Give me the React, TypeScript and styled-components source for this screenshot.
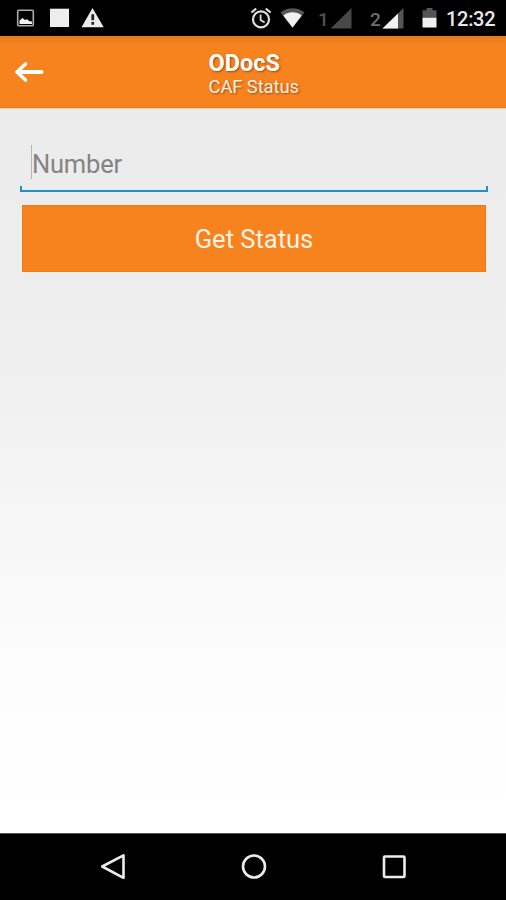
import React from 'react';
import styled, { createGlobalStyle } from 'styled-components';

const GlobalStyle = createGlobalStyle`
  * { box-sizing: border-box; }
  body { margin: 0; font-family: Roboto, "Liberation Sans", sans-serif; background: #fff; }
`;

const Screen = styled.div`
  width: 506px;
  height: 900px;
  display: flex;
  flex-direction: column;
  overflow: hidden;
`;

const StatusBar = styled.div`
  flex: none;
  height: 36px;
  background: #000;
  display: flex;
  align-items: center;
  padding: 0 10px 0 16px;
`;

const StatusGlyph = styled.svg<{ $gap?: number }>`
  flex: none;
  display: block;
  margin-right: ${(p) => p.$gap ?? 0}px;
`;

const Spacer = styled.div`
  flex: 1;
`;

const SimNumber = styled.span<{ $dim?: boolean }>`
  width: 12px;
  font-size: 19px;
  line-height: 22px;
  padding-top: 4px;
  font-weight: 500;
  color: ${(p) => (p.$dim ? '#515151' : '#6e6e6e')};
`;

const Clock = styled.span`
  width: 50px;
  font-size: 20px;
  line-height: 22px;
  padding-top: 2px;
  font-weight: 500;
  letter-spacing: -0.3px;
  color: #e8e8e8;
  white-space: nowrap;
`;

const AppBar = styled.header`
  flex: none;
  height: 73px;
  display: flex;
  background: linear-gradient(#e6781c 0, #f07d1d 4px, #f7831f 10px, #f7831f 70px, #ee7b18 72px, #f9cfad 72px);
`;

const BackButton = styled.button`
  width: 208.5px;
  height: 72px;
  padding: 0 0 0 14px;
  border: 0;
  background: none;
  display: flex;
  align-items: center;
`;

const Titles = styled.div`
  padding-top: 13px;
  color: #fff;
  text-shadow: 1px 1px 2px rgba(110, 45, 0, 0.65);
`;

const Title = styled.h1`
  margin: 0;
  font-size: 23.5px;
  line-height: 29px;
  font-weight: 700;
`;

const Subtitle = styled.div`
  font-size: 18.5px;
  line-height: 18px;
  letter-spacing: -0.15px;
  color: #fff0e3;
`;

const Content = styled.main`
  flex: 1;
  padding: 31px 18px 0 20px;
  background: linear-gradient(#ebebeb 0, #efefef 35%, #f7f7f7 60%, #fdfdfd 80%, #fff 100%);
`;

const Field = styled.div`
  height: 52px;
  display: flex;
  flex-direction: column;
  justify-content: space-between;
`;

const FieldText = styled.div`
  height: 34px;
  margin: 5px 0 0 11px;
  border-left: 1.5px solid #b5b5b5;
  font-size: 25.5px;
  letter-spacing: -0.2px;
  line-height: 38px;
  color: #848484;
`;

const Underline = styled.div`
  height: 6px;
  border: 2px solid #2091c3;
  border-top: 0;
`;

const SubmitButton = styled.button`
  display: block;
  width: 464px;
  height: 67px;
  margin: 12.5px 0 0 2px;
  padding: 2px 0 0;
  border: 1px solid #ec7c1a;
  background: #f7831f;
  color: #fff2e6;
  font: 400 25.5px/30px Roboto, "Liberation Sans", sans-serif;
`;

const NavBar = styled.nav`
  flex: none;
  height: 67px;
  background: #000;
  border-top: 1px solid #555;
  display: flex;
  align-items: center;
  justify-content: space-between;
  padding: 0 98px 0 99px;
`;

const NavGlyph = styled.svg`
  display: block;
  width: 28px;
  height: 28px;
  fill: none;
  stroke: #ececec;
  stroke-width: 2.6;
  stroke-linejoin: round;
`;

export default function App() {
  return (
    <>
      <GlobalStyle />
      <Screen>
        <StatusBar>
          <StatusGlyph width="19" height="22" $gap={15}>
            <rect x="1.7" y="3.2" width="15.6" height="15.6" rx="1" fill="none" stroke="#aaa" strokeWidth="1.6" />
            <path d="M3.5 17v-3.500l3-2.500 2.500 2 2-.8 2.500 2 2.500.4V17z" fill="#f2f2f2" />
          </StatusGlyph>
          <StatusGlyph width="19" height="22" $gap={12}>
            <rect y="1.7" width="19" height="18.3" fill="#ededed" />
          </StatusGlyph>
          <StatusGlyph width="23" height="22">
            <path d="M11.5 1 L22.7 20.2 H.5z" fill="#ececec" />
            <path d="M10.4 7.3h2.7v6h-2.700zM10.400 15h2.700v2.800h-2.700z" fill="#222" />
          </StatusGlyph>
          <Spacer />
          <StatusGlyph width="22" height="22" $gap={8} fill="none" stroke="#dedede">
            <circle cx="11" cy="12.4" r="8" strokeWidth="2.2" />
            <path d="M1.4 5.5 6.2 1.6M20.6 5.5 15.8 1.6" strokeWidth="2.2" />
            <path d="M10.6 7.4v5.500l4 2.700" strokeWidth="1.8" />
          </StatusGlyph>
          <StatusGlyph width="25" height="22" $gap={13}>
            <path d="M.5 5.600C7-.3 18-.3 24.500 5.600L12.500 21z" fill="#555" />
            <path d="M3.300 8.500C8.400 4.300 16.600 4.300 21.700 8.500L12.500 20.500z" fill="#f1f1f1" />
          </StatusGlyph>
          <SimNumber $dim>1</SimNumber>
          <StatusGlyph width="22" height="22" $gap={18}>
            <path d="M21.500 1v20.500H.7z" fill="#484848" />
          </StatusGlyph>
          <SimNumber>2</SimNumber>
          <StatusGlyph width="22" height="22" $gap={18}>
            <path d="M21.500 1v20.500H.5z" fill="#555" />
            <path d="M16 6.400v15.100H.5z" fill="#f2f2f2" />
          </StatusGlyph>
          <StatusGlyph width="15" height="22" $gap={9}>
            <path d="M.5 3.200H4.500V1h6v2.200h4V11H.5z" fill="#555" />
            <path d="M.5 10.800h14v9.700H.5z" fill="#f0f0f0" />
          </StatusGlyph>
          <Clock>12:32</Clock>
        </StatusBar>

        <AppBar>
          <BackButton aria-label="Back">
            <svg width="31" height="24" fill="none" stroke="#fff" strokeLinecap="round" strokeLinejoin="round">
              <path d="M3.500 12H27.500" strokeWidth="4" />
              <path d="M11.500 4 3 12l8.500 8" strokeWidth="3.600" />
            </svg>
          </BackButton>
          <Titles>
            <Title>ODocS</Title>
            <Subtitle>CAF Status</Subtitle>
          </Titles>
        </AppBar>

        <Content>
          <Field>
            <FieldText>Number</FieldText>
            <Underline />
          </Field>
          <SubmitButton>Get Status</SubmitButton>
        </Content>

        <NavBar>
          <NavGlyph viewBox="0 0 28 28">
            <path d="M24.500 2.300V24.800L3.200 13.500z" />
          </NavGlyph>
          <NavGlyph viewBox="0 0 28 28">
            <circle cx="14" cy="13.500" r="11" />
          </NavGlyph>
          <NavGlyph viewBox="0 0 28 28">
            <rect x="4" y="3.500" width="20.500" height="20.500" rx="1" />
          </NavGlyph>
        </NavBar>
      </Screen>
    </>
  );
}
